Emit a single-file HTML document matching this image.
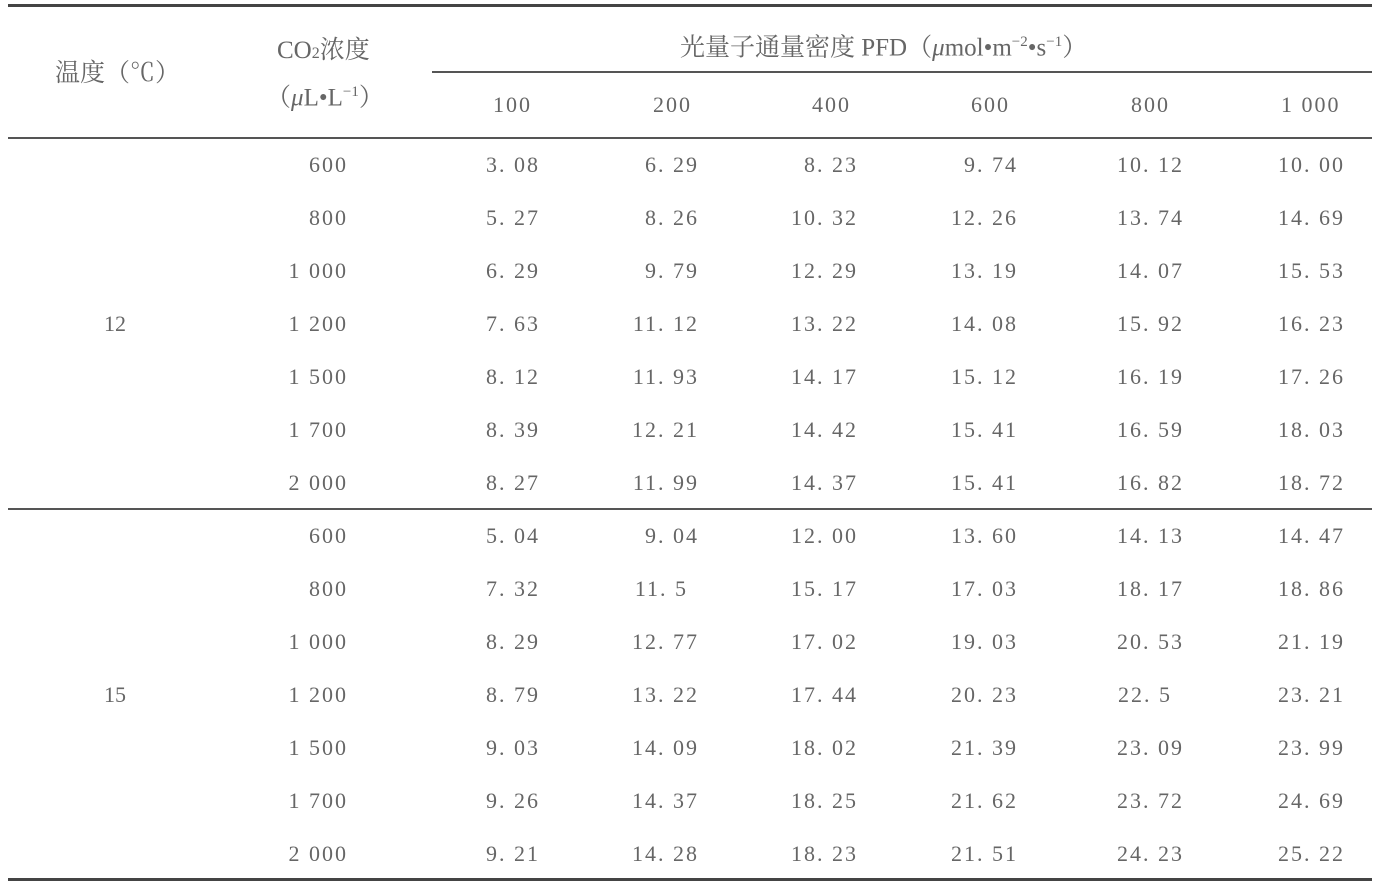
<!DOCTYPE html>
<html><head><meta charset="utf-8"><style>
body{margin:0;background:#fff;width:1375px;height:883px;position:relative;overflow:hidden;font-family:"Liberation Serif","Noto Serif CJK SC",serif;color:#666;font-size:22px}
.l{position:absolute;background:#555}
.r{position:absolute;left:0;width:1375px;height:26px;line-height:26px}
.r div{position:absolute;white-space:nowrap;letter-spacing:2px}
.b{right:1027px}.c{right:835px}.d{right:676px}.e{right:517px}.f{right:357px}.h{right:191px}.g{right:30px}
.t{position:absolute;white-space:nowrap;line-height:28px;font-size:25px}
sup{font-size:15px}
</style></head><body>
<div class="l" style="left:8px;top:4px;width:1364px;height:3px;background:#444"></div>
<div class="l" style="left:432px;top:71px;width:940px;height:2px"></div>
<div class="l" style="left:8px;top:137px;width:1364px;height:2px"></div>
<div class="l" style="left:8px;top:508px;width:1364px;height:2px"></div>
<div class="l" style="left:8px;top:878px;width:1364px;height:3px;background:#444"></div>

<div class="t" style="left:55px;top:60px">温度（℃）</div>
<div class="t" style="left:277px;top:37px">CO<span style="font-size:16px">2</span>浓度</div>
<div class="t" style="left:266px;top:78px">（<i>μ</i>L•L<sup>−1</sup>）</div>
<div class="t" style="left:680px;top:28px">光量子通量密度 PFD（<i>μ</i>mol•m<sup>−2</sup>•s<sup>−1</sup>）</div>
<div class="r" style="top:92px"><div style="left:493px">100</div><div style="left:653px">200</div><div style="left:812px">400</div><div style="left:971px">600</div><div style="left:1131px">800</div><div style="left:1281px">1 000</div></div>

<div class="t" style="left:104px;top:310px;font-size:22px">12</div>
<div class="t" style="left:104px;top:681px;font-size:22px">15</div>

<div class="r" style="top:152px"><div class="b">600</div><div class="c">3. 08</div><div class="d">6. 29</div><div class="e">8. 23</div><div class="f">9. 74</div><div class="h">10. 12</div><div class="g">10. 00</div></div>
<div class="r" style="top:205px"><div class="b">800</div><div class="c">5. 27</div><div class="d">8. 26</div><div class="e">10. 32</div><div class="f">12. 26</div><div class="h">13. 74</div><div class="g">14. 69</div></div>
<div class="r" style="top:258px"><div class="b">1 000</div><div class="c">6. 29</div><div class="d">9. 79</div><div class="e">12. 29</div><div class="f">13. 19</div><div class="h">14. 07</div><div class="g">15. 53</div></div>
<div class="r" style="top:311px"><div class="b">1 200</div><div class="c">7. 63</div><div class="d">11. 12</div><div class="e">13. 22</div><div class="f">14. 08</div><div class="h">15. 92</div><div class="g">16. 23</div></div>
<div class="r" style="top:364px"><div class="b">1 500</div><div class="c">8. 12</div><div class="d">11. 93</div><div class="e">14. 17</div><div class="f">15. 12</div><div class="h">16. 19</div><div class="g">17. 26</div></div>
<div class="r" style="top:417px"><div class="b">1 700</div><div class="c">8. 39</div><div class="d">12. 21</div><div class="e">14. 42</div><div class="f">15. 41</div><div class="h">16. 59</div><div class="g">18. 03</div></div>
<div class="r" style="top:470px"><div class="b">2 000</div><div class="c">8. 27</div><div class="d">11. 99</div><div class="e">14. 37</div><div class="f">15. 41</div><div class="h">16. 82</div><div class="g">18. 72</div></div>

<div class="r" style="top:523px"><div class="b">600</div><div class="c">5. 04</div><div class="d">9. 04</div><div class="e">12. 00</div><div class="f">13. 60</div><div class="h">14. 13</div><div class="g">14. 47</div></div>
<div class="r" style="top:576px"><div class="b">800</div><div class="c">7. 32</div><div style="right:687px">11. 5</div><div class="e">15. 17</div><div class="f">17. 03</div><div class="h">18. 17</div><div class="g">18. 86</div></div>
<div class="r" style="top:629px"><div class="b">1 000</div><div class="c">8. 29</div><div class="d">12. 77</div><div class="e">17. 02</div><div class="f">19. 03</div><div class="h">20. 53</div><div class="g">21. 19</div></div>
<div class="r" style="top:682px"><div class="b">1 200</div><div class="c">8. 79</div><div class="d">13. 22</div><div class="e">17. 44</div><div class="f">20. 23</div><div style="right:203px">22. 5</div><div class="g">23. 21</div></div>
<div class="r" style="top:735px"><div class="b">1 500</div><div class="c">9. 03</div><div class="d">14. 09</div><div class="e">18. 02</div><div class="f">21. 39</div><div class="h">23. 09</div><div class="g">23. 99</div></div>
<div class="r" style="top:788px"><div class="b">1 700</div><div class="c">9. 26</div><div class="d">14. 37</div><div class="e">18. 25</div><div class="f">21. 62</div><div class="h">23. 72</div><div class="g">24. 69</div></div>
<div class="r" style="top:841px"><div class="b">2 000</div><div class="c">9. 21</div><div class="d">14. 28</div><div class="e">18. 23</div><div class="f">21. 51</div><div class="h">24. 23</div><div class="g">25. 22</div></div>
</body></html>
